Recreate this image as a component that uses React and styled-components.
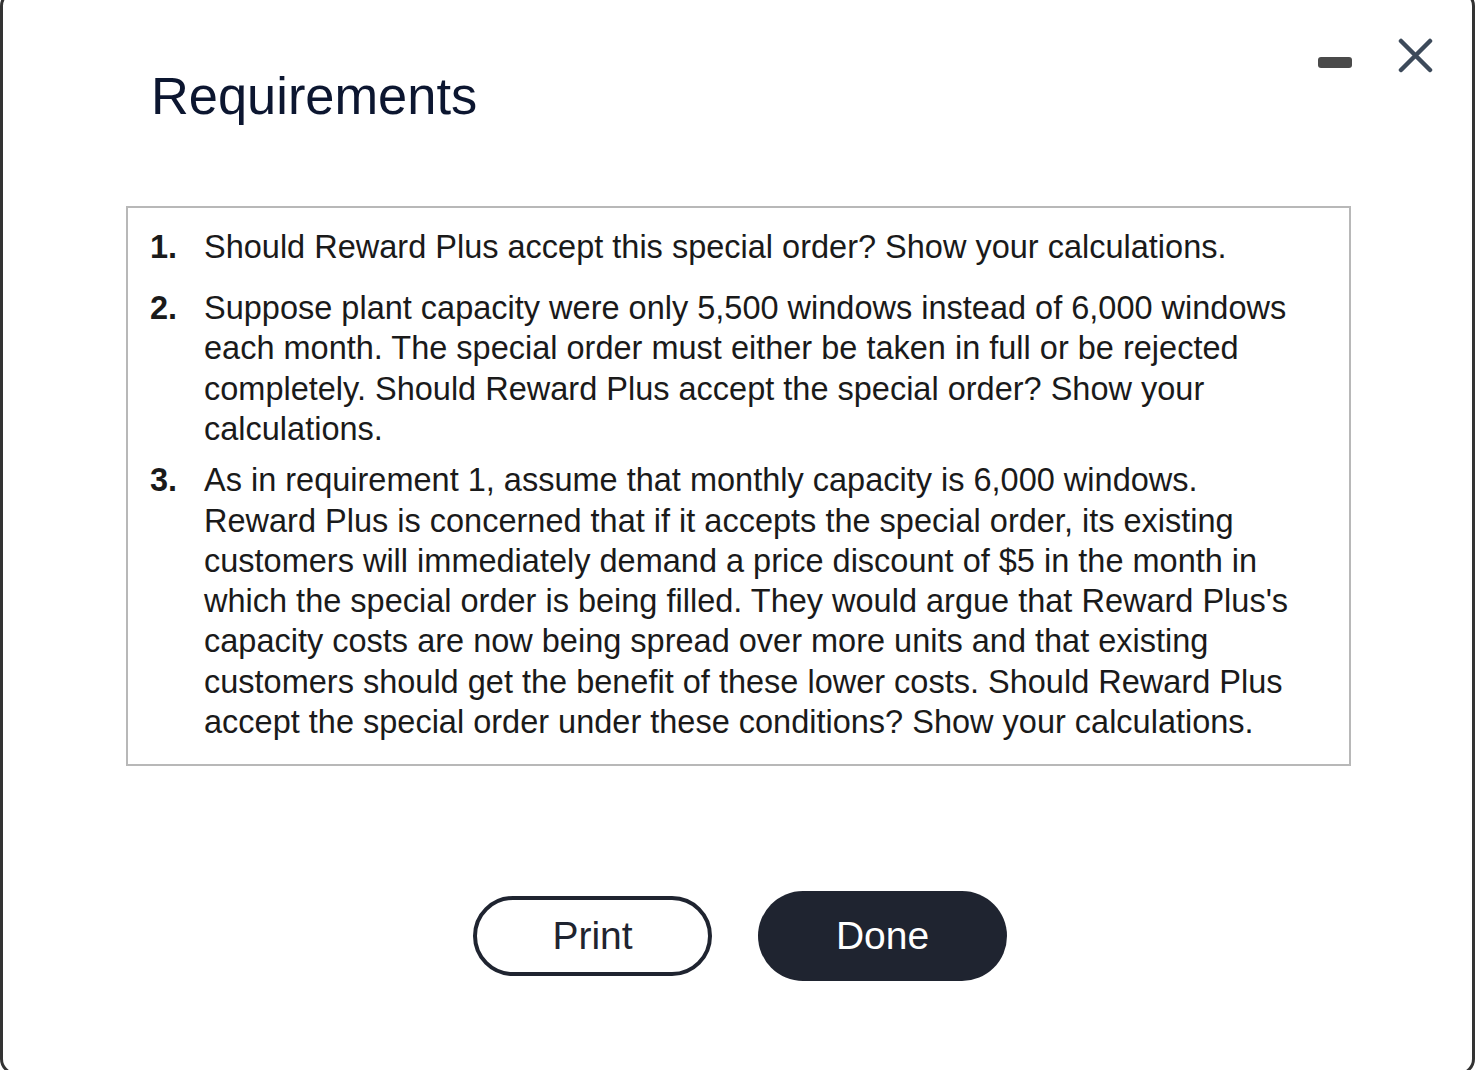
import styled, { createGlobalStyle } from 'styled-components';

const GlobalStyle = createGlobalStyle`
  html, body {
    margin: 0;
    padding: 0;
    background: #fff;
    overflow: hidden;
  }
  body {
    font-family: "Liberation Sans", Arial, sans-serif;
  }
`;

const Window = styled.div`
  box-sizing: border-box;
  width: 1475px;
  height: 1085px;
  margin-top: -10px;
  border: 3px solid #333;
  border-radius: 16px;
  background: #fff;
`;

const Header = styled.div`
  display: flex;
  align-items: flex-start;
  padding: 45px 39px 0 148px;
`;

const Title = styled.h1`
  margin: 29px 0 0 0;
  font-size: 52.4px;
  line-height: 1.14;
  font-weight: 400;
  color: #0c1630;
`;

const Controls = styled.div`
  display: flex;
  align-items: flex-start;
  gap: 46px;
  margin-left: auto;
`;

const MinimizeBar = styled.button`
  width: 34px;
  height: 11px;
  margin-top: 19px;
  padding: 0;
  border: none;
  border-radius: 3px;
  background: #4a4a4a;
`;

const CloseButton = styled.button`
  width: 35px;
  height: 35px;
  padding: 0;
  border: none;
  background: none;
  display: flex;
`;

const Body = styled.div`
  padding: 0 121px 0 123px;
`;

const RequirementsBox = styled.div`
  margin-top: 79px;
  border: 2px solid #b8b8b8;
  padding: 19px 50px 22px 22px;
`;

const List = styled.ol`
  margin: 0;
  padding: 0;
  list-style: none;
`;

const Item = styled.li`
  display: grid;
  grid-template-columns: 54px 1fr;
  margin-top: ${(p) => p.$gap}px;
  font-size: 32.5px;
  line-height: 40.3px;
  color: #1a1a1a;
`;

const Number = styled.span`
  font-weight: 700;
`;

const ButtonRow = styled.div`
  display: flex;
  justify-content: center;
  align-items: center;
  gap: 46px;
  margin-top: 125px;
  padding-left: 3px;
`;

const PillButton = styled.button`
  box-sizing: border-box;
  font-family: "Liberation Sans", Arial, sans-serif;
  font-size: 39px;
  border-radius: 999px;
  cursor: pointer;
  width: ${(p) => (p.$primary ? 249 : 239)}px;
  height: ${(p) => (p.$primary ? 90 : 80)}px;
  border: ${(p) => (p.$primary ? 'none' : '4px solid #1f2430')};
  background: ${(p) => (p.$primary ? '#1f2430' : '#fff')};
  color: ${(p) => (p.$primary ? '#fff' : '#1f2430')};
`;

const requirements = [
  'Should Reward Plus accept this special order? Show your calculations.',
  'Suppose plant capacity were only 5,500 windows instead of 6,000 windows each month. The special order must either be taken in full or be rejected completely. Should Reward Plus accept the special order? Show your calculations.',
  "As in requirement 1, assume that monthly capacity is 6,000 windows. Reward Plus is concerned that if it accepts the special order, its existing customers will immediately demand a price discount of $5 in the month in which the special order is being filled. They would argue that Reward Plus's capacity costs are now being spread over more units and that existing customers should get the benefit of these lower costs. Should Reward Plus accept the special order under these conditions? Show your calculations.",
];

const gaps = [0, 21, 11];

const App = () => (
  <>
    <GlobalStyle />
    <Window>
      <Header>
        <Title>Requirements</Title>
        <Controls>
          <MinimizeBar aria-label="Minimize" />
          <CloseButton aria-label="Close">
            <svg width="35" height="35" viewBox="0 0 35 35">
              <path
                d="M3 3 L32 32 M32 3 L3 32"
                stroke="#3d4a5a"
                strokeWidth="4.5"
                strokeLinecap="round"
                fill="none"
              />
            </svg>
          </CloseButton>
        </Controls>
      </Header>
      <Body>
        <RequirementsBox>
          <List>
            {requirements.map((text, i) => (
              <Item key={i} $gap={gaps[i]}>
                <Number>{i + 1}.</Number>
                <span>{text}</span>
              </Item>
            ))}
          </List>
        </RequirementsBox>
        <ButtonRow>
          <PillButton>Print</PillButton>
          <PillButton $primary>Done</PillButton>
        </ButtonRow>
      </Body>
    </Window>
  </>
);

export default App;
